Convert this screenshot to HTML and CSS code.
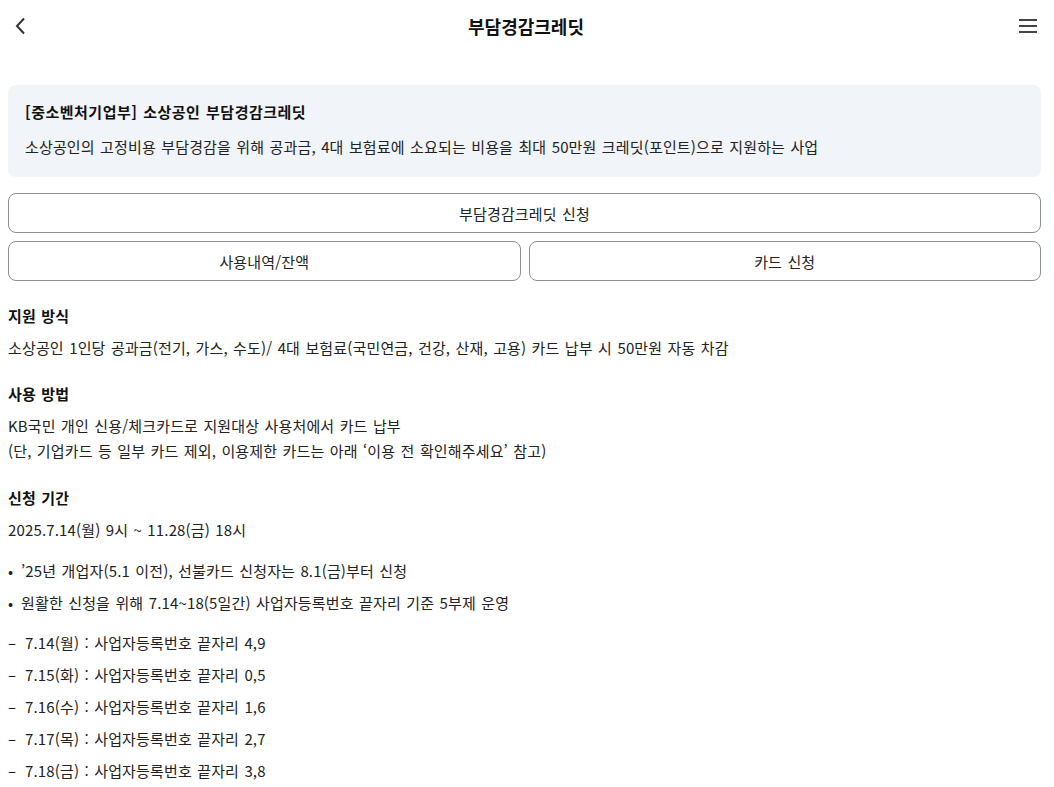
FILE: index.html
```html
<!DOCTYPE html>
<html lang="ko">
<head>
    <meta charset="UTF-8">
    <meta name="viewport" content="width=device-width, initial-scale=1.0">
    <title>부담경감크레딧</title>
    <link rel="stylesheet" href="styles.css">
</head>
<body>

<header class="topbar">
    <button class="icon-btn" aria-label="뒤로">
        <svg width="14" height="18" viewBox="0 0 14 18"><path d="M10 1.5 L3 9 L10 16.5" fill="none" stroke="#333" stroke-width="2"/></svg>
    </button>
    <h1>부담경감크레딧</h1>
    <button class="icon-btn" aria-label="메뉴">
        <svg width="20" height="16" viewBox="0 0 20 16"><path d="M1 2h18M1 8h18M1 14h18" stroke="#444" stroke-width="2"/></svg>
    </button>
</header>

<div class="container">
    <div class="notice">
        <p class="notice-title">[중소벤처기업부] 소상공인 부담경감크레딧</p>
        <p class="notice-desc">소상공인의 고정비용 부담경감을 위해 공과금, 4대 보험료에 소요되는 비용을 최대 50만원 크레딧(포인트)으로 지원하는 사업</p>
    </div>

    <button class="outline-btn full">부담경감크레딧 신청</button>
    <div class="btn-row">
        <button class="outline-btn">사용내역/잔액</button>
        <button class="outline-btn">카드 신청</button>
    </div>

    <section class="section">
        <h2>지원 방식</h2>
        <p class="line">소상공인 1인당 공과금(전기, 가스, 수도)/ 4대 보험료(국민연금, 건강, 산재, 고용) 카드 납부 시 50만원 자동 차감</p>
    </section>

    <section class="section">
        <h2>사용 방법</h2>
        <p class="lines">KB국민 개인 신용/체크카드로 지원대상 사용처에서 카드 납부<br>(단, 기업카드 등 일부 카드 제외, 이용제한 카드는 아래 ‘이용 전 확인해주세요’ 참고)</p>
    </section>

    <section class="section">
        <h2>신청 기간</h2>
        <p class="line">2025.7.14(월) 9시 ~ 11.28(금) 18시</p>
        <ul class="bullets">
            <li>’25년 개업자(5.1 이전), 선불카드 신청자는 8.1(금)부터 신청</li>
            <li>원활한 신청을 위해 7.14~18(5일간) 사업자등록번호 끝자리 기준 5부제 운영</li>
        </ul>
        <ul class="dashes">
            <li>7.14(월) : 사업자등록번호 끝자리 4,9</li>
            <li>7.15(화) : 사업자등록번호 끝자리 0,5</li>
            <li>7.16(수) : 사업자등록번호 끝자리 1,6</li>
            <li>7.17(목) : 사업자등록번호 끝자리 2,7</li>
            <li>7.18(금) : 사업자등록번호 끝자리 3,8</li>
        </ul>
    </section>
</div>

</body>
</html>
```

FILE: styles.css
```css
body {
    font-family: "Noto Sans CJK KR", "Noto Sans", sans-serif;
    margin: 0;
    padding: 0;
    background-color: #fff;
    color: #222;
    font-size: 15px;
    letter-spacing: 0.15px;
    word-spacing: 1px;
}
p, h1, h2, ul {
    margin: 0;
    padding: 0;
}
.topbar {
    height: 52px;
    display: flex;
    align-items: center;
    justify-content: space-between;
    padding: 0 16px 0 14px;
}
.topbar h1 {
    font-size: 18px;
    font-weight: bold;
    color: #111;
    line-height: 24px;
    letter-spacing: 0;
}
.icon-btn {
    background: none;
    border: none;
    padding: 0;
    width: 30px;
    height: 30px;
    display: flex;
    align-items: center;
    cursor: pointer;
}
.icon-btn:last-child {
    justify-content: flex-end;
}
.container {
    padding: 0 13px 0 8px;
}
.notice {
    margin-top: 33px;
    background-color: #f1f4f8;
    border-radius: 8px;
    padding: 16px 17px 19px;
}
.notice-title {
    font-weight: bold;
    line-height: 22px;
    color: #111;
    letter-spacing: 0.5px;
}
.notice-desc {
    margin-top: 13px;
    line-height: 22px;
}
.outline-btn {
    font-family: inherit;
    font-size: 15px;
    letter-spacing: inherit;
    word-spacing: inherit;
    color: #222;
    background: #fff;
    border: 1px solid #8a8f96;
    border-radius: 8px;
    height: 40px;
    cursor: pointer;
    display: block;
}
.outline-btn.full {
    width: 100%;
    margin-top: 16px;
}
.btn-row {
    display: flex;
    gap: 8px;
    margin-top: 8px;
}
.btn-row .outline-btn {
    flex: 1;
}
.section {
    margin-top: 24px;
}
.section h2 {
    font-size: 15px;
    font-weight: bold;
    line-height: 22px;
    color: #111;
}
.line {
    margin-top: 10px;
    line-height: 22px;
}
.lines {
    margin-top: 8px;
    line-height: 25px;
}
.bullets {
    list-style: none;
    margin-top: 14px;
}
.bullets li {
    line-height: 32px;
    padding-left: 13px;
    position: relative;
}
.bullets li::before {
    content: "•";
    position: absolute;
    left: 0;
}
.dashes {
    list-style: none;
    margin-top: 8px;
}
.dashes li {
    line-height: 32px;
    padding-left: 17px;
    position: relative;
}
.dashes li::before {
    content: "–";
    position: absolute;
    left: 0;
}
```
